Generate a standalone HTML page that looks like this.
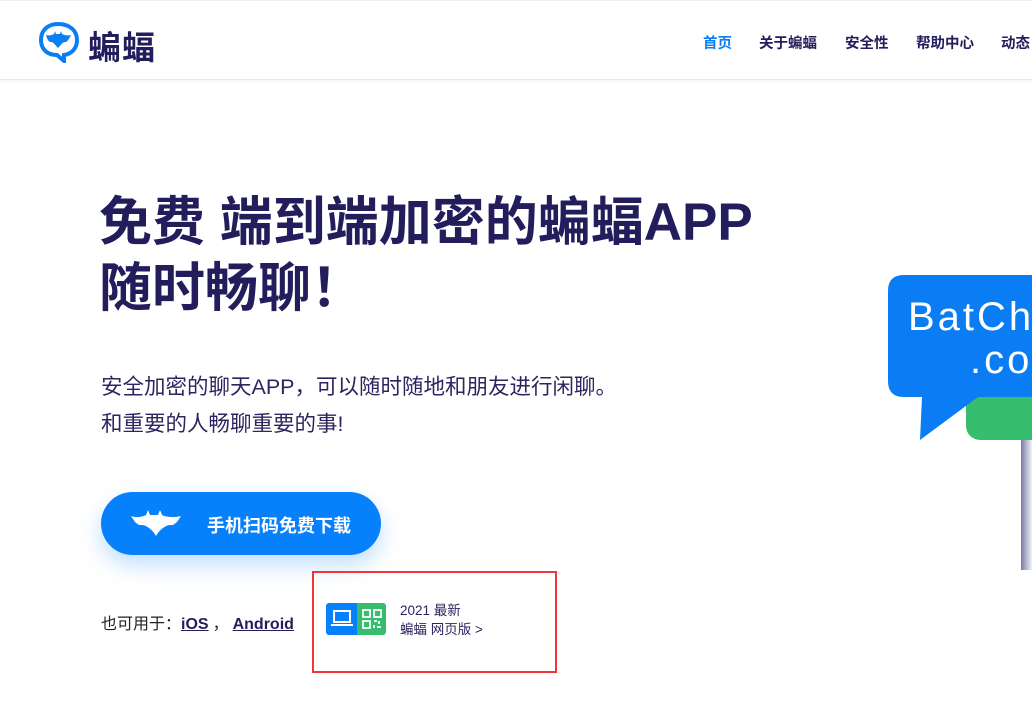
<!DOCTYPE html>
<html><head><meta charset="utf-8"><style>
*{margin:0;padding:0;box-sizing:border-box}
body{width:1032px;height:714px;overflow:hidden;background:#fff;font-family:"Liberation Sans","Noto Sans CJK SC",sans-serif;color:#231d5c;position:relative}
.hdr{position:absolute;left:0;top:0;width:1032px;height:80px;border-bottom:1px solid #e6e8ef;box-shadow:0 2px 4px rgba(0,0,0,.04);border-top:1px solid #eceef2}
.nav{position:absolute;top:31px;font-size:14.5px;font-weight:bold;color:#231d5c;white-space:nowrap}
.abs{position:absolute;white-space:nowrap}
</style></head><body>
<div class="hdr">
 <svg class="abs" style="left:38px;top:20px" width="42" height="42" viewBox="0 0 42 42">
  <path d="M20 3 C31 3 39 9 39 19 C39 28 33 33 26 34 L26 40 L19 34 C9 34 3 28 3 19 C3 9 10 3 20 3Z" fill="none" stroke="#0a7ef5" stroke-width="4"/>
  <path d="M8 14 C12 15 14 14 16 13 L17 10 L18 13 L22 13 L23 10 L24 13 C26 14 29 15 33 14 C31 18 29 22 26 21 C24 22 22 25 20 27 C18 25 16 22 14 21 C11 22 9 18 8 14Z" fill="#0a7ef5"/>
 </svg>
 <div class="abs" style="left:88px;top:20px;font-size:33px;font-weight:bold;color:#231d5c;letter-spacing:1px">蝙蝠</div>
 <div class="nav" style="left:703px;color:#0a7ef5">首页</div>
 <div class="nav" style="left:759px">关于蝙蝠</div>
 <div class="nav" style="left:845px">安全性</div>
 <div class="nav" style="left:916px">帮助中心</div>
 <div class="nav" style="left:1001px">动态</div>
</div>
<div class="abs" style="left:99px;top:190px;font-size:53px;font-weight:bold;line-height:66px;color:#231d5c">免费 端到端加密的蝙蝠APP<br>随时畅聊！</div>
<div class="abs" style="left:101px;top:369px;font-size:21.5px;line-height:37px;color:#2c2660">安全加密的聊天APP，可以随时随地和朋友进行闲聊。<br>和重要的人畅聊重要的事!</div>
<div class="abs" style="left:101px;top:492px;width:280px;height:63px;border-radius:32px;background:#0780fb;box-shadow:0 10px 22px rgba(7,128,251,.25)">
 <svg class="abs" style="left:30px;top:18px" width="50" height="28" viewBox="0 0 50 28"><path d="M0 6 C6 8 11 7 15 5 L17 0 L19 5 L27 5 L29 0 L31 5 C35 7 42 8 50 6 C46 12 44 16 38 15 C34 16 28 20 25 26 C22 20 16 16 12 15 C6 16 4 12 0 6Z" fill="#fff"/></svg>
 <div class="abs" style="left:106px;top:20px;font-size:18px;font-weight:bold;color:#fff">手机扫码免费下载</div>
</div>
<div class="abs" style="left:101px;top:610px;font-size:16px;color:#222">也可用于：<u style="font-weight:bold;color:#231d5c">iOS</u><span style="margin:0 4px">，</span><u style="font-weight:bold;color:#231d5c">Android</u></div>
<div class="abs" style="left:312px;top:571px;width:245px;height:102px;border:2px solid #f0353b"></div>
<div class="abs" style="left:326px;top:603px;width:60px;height:32px;border-radius:3px;overflow:hidden">
 <div class="abs" style="left:0;top:0;width:31px;height:32px;background:#0780fb"></div>
 <div class="abs" style="left:31px;top:0;width:29px;height:32px;background:#36bd6e"></div>
 <svg class="abs" style="left:5px;top:7px" width="22" height="18" viewBox="0 0 22 18"><rect x="3" y="1" width="16" height="11" fill="none" stroke="#fff" stroke-width="2"/><rect x="0" y="14" width="22" height="2" fill="#fff"/></svg>
 <svg class="abs" style="left:36px;top:6px" width="20" height="20" viewBox="0 0 20 20" fill="none" stroke="#fff" stroke-width="1.8"><rect x="1" y="1" width="7" height="7"/><rect x="12" y="1" width="7" height="7"/><rect x="1" y="12" width="7" height="7"/><path d="M12 12h3M17 12v3M12 16v3M15 18h4" /></svg>
</div>
<div class="abs" style="left:400px;top:601px;font-size:13.5px;line-height:19px;color:#2c2660">2021 最新<br>蝙蝠 网页版 &gt;</div>
<div class="abs" style="left:966px;top:392px;width:90px;height:48px;border-radius:14px;background:#36bd6e"></div>
<div class="abs" style="left:1021px;top:440px;width:11px;height:130px;background:linear-gradient(90deg,#7c7ba6,#eef2fb)"></div>
<svg class="abs" style="left:888px;top:275px" width="144" height="166" viewBox="0 0 144 166"><path d="M16 0 H144 V122 H90 L32 165 L34 122 H16 Q0 122 0 106 V16 Q0 0 16 0Z" fill="#0a7df5"/></svg>
<div class="abs" style="left:908px;top:297px;font-size:40px;color:#fff;letter-spacing:3px;line-height:40px">BatCha</div>
<div class="abs" style="left:970px;top:340px;font-size:40px;color:#fff;letter-spacing:3px;line-height:40px">.co</div>
</body></html>
